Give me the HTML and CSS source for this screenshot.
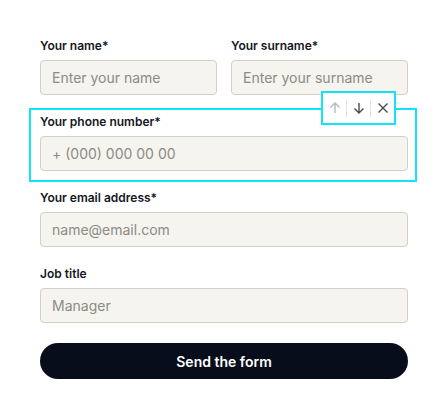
FILE: index.html
```html
<!DOCTYPE html>
<html lang="en">
<head>
<meta charset="utf-8">
<title>Form</title>
<link rel="stylesheet" href="styles.css">
</head>
<body>
<form class="form">
  <div class="row">
    <div class="field">
      <label class="label">Your name*</label>
      <input class="input" type="text" placeholder="Enter your name">
    </div>
    <div class="field">
      <label class="label">Your surname*</label>
      <input class="input" type="text" placeholder="Enter your surname">
    </div>
  </div>
  <div class="field selected">
    <label class="label">Your phone number*</label>
    <input class="input" type="text" placeholder="+ (000) 000 00 00">
    <div class="frame"></div>
    <div class="toolbar">
      <button type="button" class="tool disabled" aria-label="Move up">
        <svg width="12" height="12" viewBox="0 0 12 12"><path d="M6 11V1M1.5 5.5L6 1l4.5 4.5" fill="none" stroke="currentColor" stroke-width="1.4"/></svg>
      </button>
      <span class="sep"></span>
      <button type="button" class="tool" aria-label="Move down">
        <svg width="12" height="12" viewBox="0 0 12 12"><path d="M6 1v10M1.5 6.5L6 11l4.5-4.5" fill="none" stroke="currentColor" stroke-width="1.4"/></svg>
      </button>
      <span class="sep"></span>
      <button type="button" class="tool" aria-label="Remove">
        <svg width="12" height="12" viewBox="0 0 12 12"><path d="M1.5 1.5l9 9M10.5 1.5l-9 9" fill="none" stroke="currentColor" stroke-width="1.4"/></svg>
      </button>
    </div>
  </div>
  <div class="field">
    <label class="label">Your email address*</label>
    <input class="input" type="text" placeholder="name@email.com">
  </div>
  <div class="field">
    <label class="label">Job title</label>
    <input class="input" type="text" placeholder="Manager">
  </div>
  <button type="button" class="submit">Send the form</button>
</form>
</body>
</html>
```
FILE: styles.css
```css
* { box-sizing: border-box; }
html, body { margin: 0; background: #ffffff; }
body { font-family: Inter, "Noto Sans", sans-serif; }
.form {
  display: flex;
  flex-direction: column;
  gap: 18px;
  padding: 37px 40px 0 40px;
}
.row {
  display: grid;
  grid-template-columns: 1fr 1fr;
  gap: 14px;
}
.field {
  display: flex;
  flex-direction: column;
  gap: 5px;
  position: relative;
}
.label {
  font-size: 12px;
  font-weight: 600;
  line-height: 18px;
  color: #14171f;
}
.input {
  height: 35px;
  width: 100%;
  border: 1px solid #d2cfc7;
  border-radius: 4px;
  background: #f5f4ef;
  padding: 0 11px;
  font-family: inherit;
  font-size: 14px;
  color: #14171f;
  outline: none;
}
.input::placeholder { color: #8c8b86; }
.frame {
  position: absolute;
  top: -5px;
  left: -11px;
  right: -9px;
  bottom: -11px;
  border: 2px solid #12e4f8;
  pointer-events: none;
}
.toolbar {
  position: absolute;
  top: -22px;
  right: 12px;
  height: 34px;
  display: flex;
  align-items: center;
  background: #ffffff;
  border: 2px solid #12e4f8;
}
.tool {
  width: 23px;
  height: 30px;
  padding: 0;
  border: 0;
  background: none;
  display: flex;
  align-items: center;
  justify-content: center;
  color: #4b4b4b;
}
.tool.disabled { color: #b9b9b9; }
.sep {
  width: 1px;
  height: 17px;
  background: #e3e3e3;
}
.submit {
  margin-top: 2px;
  height: 36px;
  border: 0;
  border-radius: 18px;
  background: #070d1a;
  color: #ffffff;
  font-family: inherit;
  font-size: 14px;
  font-weight: 600;
}
```
